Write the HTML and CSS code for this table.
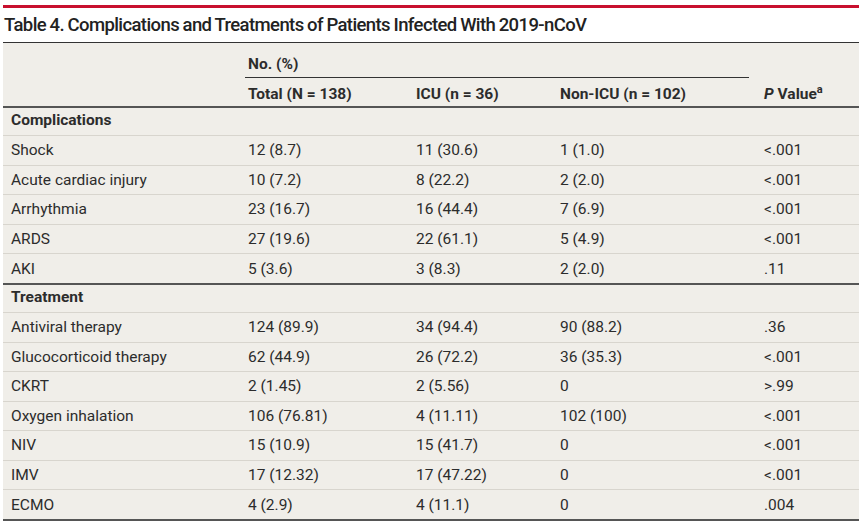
FILE: index.html
```html
<!DOCTYPE html>
<html lang="en">
<head>
<meta charset="utf-8">
<title>Table 4</title>
<link rel="stylesheet" href="styles.css">
</head>
<body>
<div class="page">
  <div class="rule"></div>
  <h1 class="title">Table 4. Complications and Treatments of Patients Infected With 2019-nCoV</h1>
  <div class="table" role="table">
    <div class="head">
      <div class="row head-top">
        <div class="cell"></div>
        <div class="cell span3"><span class="group">No. (%)</span></div>
        <div class="cell"></div>
      </div>
      <div class="row head-bottom">
        <div class="cell"></div>
        <div class="cell">Total (N = 138)</div>
        <div class="cell">ICU (n = 36)</div>
        <div class="cell">Non-ICU (n = 102)</div>
        <div class="cell"><i>P</i> Value<sup>a</sup></div>
      </div>
    </div>
    <div class="section">
      <div class="row sect"><div class="cell">Complications</div></div>
      <div class="row"><div class="cell">Shock</div><div class="cell">12 (8.7)</div><div class="cell">11 (30.6)</div><div class="cell">1 (1.0)</div><div class="cell">&lt;.001</div></div>
      <div class="row"><div class="cell">Acute cardiac injury</div><div class="cell">10 (7.2)</div><div class="cell">8 (22.2)</div><div class="cell">2 (2.0)</div><div class="cell">&lt;.001</div></div>
      <div class="row"><div class="cell">Arrhythmia</div><div class="cell">23 (16.7)</div><div class="cell">16 (44.4)</div><div class="cell">7 (6.9)</div><div class="cell">&lt;.001</div></div>
      <div class="row"><div class="cell">ARDS</div><div class="cell">27 (19.6)</div><div class="cell">22 (61.1)</div><div class="cell">5 (4.9)</div><div class="cell">&lt;.001</div></div>
      <div class="row last"><div class="cell">AKI</div><div class="cell">5 (3.6)</div><div class="cell">3 (8.3)</div><div class="cell">2 (2.0)</div><div class="cell">.11</div></div>
    </div>
    <div class="section">
      <div class="row sect"><div class="cell">Treatment</div></div>
      <div class="row"><div class="cell">Antiviral therapy</div><div class="cell">124 (89.9)</div><div class="cell">34 (94.4)</div><div class="cell">90 (88.2)</div><div class="cell">.36</div></div>
      <div class="row"><div class="cell">Glucocorticoid therapy</div><div class="cell">62 (44.9)</div><div class="cell">26 (72.2)</div><div class="cell">36 (35.3)</div><div class="cell">&lt;.001</div></div>
      <div class="row"><div class="cell">CKRT</div><div class="cell">2 (1.45)</div><div class="cell">2 (5.56)</div><div class="cell">0</div><div class="cell">&gt;.99</div></div>
      <div class="row"><div class="cell">Oxygen inhalation</div><div class="cell">106 (76.81)</div><div class="cell">4 (11.11)</div><div class="cell">102 (100)</div><div class="cell">&lt;.001</div></div>
      <div class="row"><div class="cell">NIV</div><div class="cell">15 (10.9)</div><div class="cell">15 (41.7)</div><div class="cell">0</div><div class="cell">&lt;.001</div></div>
      <div class="row"><div class="cell">IMV</div><div class="cell">17 (12.32)</div><div class="cell">17 (47.22)</div><div class="cell">0</div><div class="cell">&lt;.001</div></div>
      <div class="row last"><div class="cell">ECMO</div><div class="cell">4 (2.9)</div><div class="cell">4 (11.1)</div><div class="cell">0</div><div class="cell">.004</div></div>
    </div>
  </div>
</div>
</body>
</html>
```

FILE: styles.css
```css
html, body {
  margin: 0;
  padding: 0;
  background: #ffffff;
}

body {
  font-family: Roboto, "Liberation Sans", sans-serif;
  color: #2c2c2c;
}

.page {
  width: 856px;
  margin-left: 3px;
  padding-top: 5px;
}

.rule {
  height: 3px;
  background: #c8102e;
}

.title {
  margin: 0;
  padding: 6px 0 0 1px;
  height: 28px;
  font-size: 18.5px;
  line-height: 22px;
  font-weight: 500;
  color: #222;
  letter-spacing: -0.6px;
  word-spacing: -0.5px;
}

.table {
  background: #f0eee9;
  border-top: 1px solid #333;
  font-size: 15.5px;
}

.row {
  display: grid;
  grid-template-columns: 242px 168px 144px 204px 98px;
  align-items: center;
  box-sizing: border-box;
  height: 29.5px;
  border-bottom: 1px solid #d8d5ce;
}

.cell {
  padding-left: 3px;
  white-space: nowrap;
}

.row .cell:first-child {
  padding-left: 8px;
}

.head .row {
  font-weight: 700;
  border-bottom: none;
}

.head-top {
  height: 34px;
  align-items: start;
  padding-top: 12px;
}

.span3 {
  grid-column: span 3;
  padding-left: 0;
}

.group {
  display: block;
  width: 501px;
  padding-left: 3px;
  padding-bottom: 4px;
  border-bottom: 1px solid #333;
}

.head-bottom {
  height: 31px;
  padding-top: 5px;
  border-bottom: 2px solid #555 !important;
}

.head-bottom sup {
  font-size: 11px;
  font-weight: 700;
  vertical-align: 6px;
  line-height: 0;
}

.head-bottom i {
  font-style: italic;
}

.sect {
  display: block;
  font-weight: 700;
  padding-top: 3px;
  height: 28px;
}

.sect .cell {
  padding-left: 8px;
}

.row.last {
  border-bottom: 2px solid #555;
  height: 31px;
}
```
